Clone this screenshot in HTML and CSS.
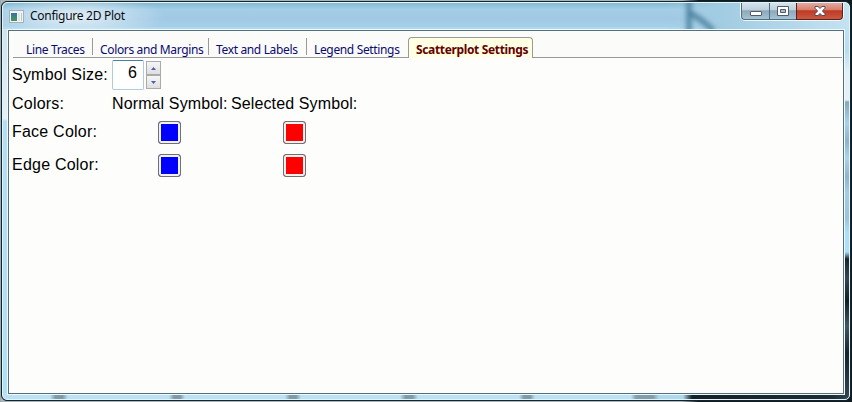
FILE: index.html
```html
<!DOCTYPE html>
<html lang="en">
<head>
<meta charset="utf-8">
<title>Configure 2D Plot</title>
<link rel="stylesheet" href="styles.css">
</head>
<body>
<div class="window">
  <div class="glass">
    <header class="titlebar">
      <svg class="app-icon" width="15" height="13" viewBox="0 0 15 13">
        <defs><linearGradient id="pane" x2="0" y2="1"><stop stop-color="#3f6fa5"/><stop offset=".45" stop-color="#3d8580"/><stop offset="1" stop-color="#4b9457"/></linearGradient></defs>
        <rect x=".5" y=".5" width="14" height="12" fill="#f1f4f5" stroke="#a3b1ba"/>
        <rect x="2" y="3" width="6" height="8" fill="url(#pane)"/>
        <rect x="9" y="3" width="2" height="8" fill="#dfe6e5"/>
        <rect x="12" y="3" width="1" height="8" fill="#b9c9c4"/>
      </svg>
      <h1 class="title">Configure 2D Plot</h1>
      <svg class="reflection" width="70" height="26" viewBox="0 0 70 26">
        <defs><filter id="soft" x="-50%" y="-50%" width="200%" height="200%"><feGaussianBlur stdDeviation="2.5"/></filter></defs>
        <path d="M19-5v36M20 10q10 5 24 18" fill="none" stroke="#4d829f" stroke-width="5" filter="url(#soft)"/>
      </svg>
      <div class="controls">
        <button class="control minimize" aria-label="Minimize"><svg width="12" height="5"><rect x=".5" y=".5" width="11" height="4" rx=".5" fill="#fff" stroke="#505a6b"/></svg></button>
        <button class="control maximize" aria-label="Maximize"><svg width="12" height="10"><path d="M.5.5h11v9H.5z" fill="#fff" stroke="#505a6b"/><path d="M3.500 3.500h5v3h-5z" fill="#a9bdcc" stroke="#505a6b"/></svg></button>
        <button class="control close" aria-label="Close"><svg width="12" height="10" viewBox="0 0 12 10"><path d="M1 .5h3l2 1.900L8 .5h3v1.700L8.400 5 11 7.800v1.700H8L6 7.600 4 9.500H1V7.800L3.600 5 1 2.200z" fill="#fff" stroke="#584c5b"/></svg></button>
      </div>
    </header>
    <main class="client">
      <nav class="tabs">
        <a class="tab line">Line Traces</a>
        <a class="tab colors">Colors and Margins</a>
        <a class="tab labels">Text and Labels</a>
        <a class="tab legend">Legend Settings</a>
        <a class="tab active">Scatterplot Settings</a>
      </nav>
      <section class="settings">
        <span class="label">Symbol Size:</span>
        <div class="spinner">
          <span class="value">6</span>
          <div class="steps">
            <button class="step" aria-label="Increase"><svg width="5" height="3"><path d="M0 3 2.500 0 5 3z" fill="#4a5fae"/></svg></button>
            <button class="step" aria-label="Decrease"><svg width="5" height="3"><path d="M0 0h5L2.500 3z" fill="#4a5fae"/></svg></button>
          </div>
        </div>
        <span class="label raised">Colors:</span>
        <span class="label column raised">Normal Symbol:</span>
        <span class="label column raised">Selected Symbol:</span>
        <span class="label raised">Face Color:</span>
        <button class="swatch blue" aria-label="Normal face color"></button>
        <button class="swatch red" aria-label="Selected face color"></button>
        <span class="label raised">Edge Color:</span>
        <button class="swatch blue" aria-label="Normal edge color"></button>
        <button class="swatch red" aria-label="Selected edge color"></button>
      </section>
    </main>
  </div>
</div>
</body>
</html>
```
FILE: styles.css
```css
* { box-sizing: border-box; }
body {
  margin: 0;
  width: 852px;
  height: 402px;
  padding: 1px;
  overflow: hidden;
  background:
    linear-gradient(#9cabb0, #9cabb0) 0 0 / 1px 100% no-repeat,
    linear-gradient(90deg, #a9b5b8 0 80%, #101b20 82%);
}
button { padding: 0; border: 0; font: inherit; }
svg { display: block; }
.window {
  width: 850px;
  height: 400px;
  border: 1px solid #14242c;
  border-radius: 6px;
  background: #14242c;
}
.glass {
  height: 398px;
  padding: 0 5px 5px;
  border: 1px solid #e3f3fb;
  border-radius: 5px;
  background:
    radial-gradient(ellipse 9px 12px at 56px 394px, #7d9ba8 40%, transparent),
    radial-gradient(ellipse 8px 12px at 174px 394px, #8099a5 40%, transparent),
    radial-gradient(ellipse 8px 12px at 290px 394px, #7d9ba8 40%, transparent),
    radial-gradient(ellipse 9px 12px at 406px 394px, #7d9ba8 40%, transparent),
    radial-gradient(ellipse 8px 12px at 524px 394px, #7d9ba8 40%, transparent),
    linear-gradient(90deg, #b9e2f7 0 628px, #829eab 633px 650px, #add9ee 656px 680px, #142126 689px, #1c2d33 830px, #344750) 0 100% / 100% 6px no-repeat,
    linear-gradient(#c5e6f5 0, #b5def1 48px, #e5f0f6 70px 97px, #84a8bd 99px, #a9d1e9 120px, #8db4ca 138px, #abd3eb 155px, #8fb5cb 174px, #a5cde5 190px, #9ac5de 215px, #a9e1fa 230px 249px, #17262c 256px, #344750 275px, #111f23 298px, #425760 323px, #13242b 350px, #344750) 100% 0 / 6px 100% no-repeat,
    linear-gradient(#c1dfeb 0, #d1e5ec 28px, #e4f1f6 116px, #b5def6 118px, #afe0f7 100%) 0 0 / 6px 100% no-repeat,
    #b5def4;
}
.titlebar {
  display: flex;
  height: 26px;
  margin: 0 -5px;
  padding: 0 5px 0 6px;
  border-radius: 5px 5px 0 0;
  background:
    radial-gradient(ellipse 90px 22px at 72px 14px, #e8f2f7dd 5%, transparent),
    linear-gradient(90deg, transparent 660px, #a2cce2 720px, #c3e2f2),
    linear-gradient(#83b9d2, #a3cee7 25%, #a1c8e5 60%, #a6d0e9 90%, #b5dfef);
}
.app-icon { margin-top: 7px; }
.title {
  margin: 4px 0 0 6px;
  font: 12px/18px "Noto Sans", "Open Sans", sans-serif;
  letter-spacing: -.28px;
  color: #080d12;
  white-space: nowrap;
}
.reflection { margin-left: auto; overflow: hidden; }
.controls {
  display: flex;
  width: 104px;
  height: 18px;
  border: 1px solid #edf8fc;
  border-top: 0;
  border-radius: 0 0 5px 5px;
}
.control {
  display: flex;
  align-items: center;
  justify-content: center;
  width: 28px;
  height: 17px;
  border: solid #536b7b;
  border-width: 0 0 1px 1px;
  background: linear-gradient(#d4e3ec, #bdd0dc 44%, #8ca8b9 48%, #a4c3d5);
}
.minimize { padding-top: 5px; border-radius: 0 0 0 4px; }
.maximize { width: 27px; }
.close {
  width: 47px;
  border-color: #5d211c;
  border-right-width: 1px;
  border-radius: 0 0 4px;
  background: linear-gradient(#e6aa9f, #d77e6b 44%, #bd3a23 48%, #cc5841);
}
.client {
  width: 838px;
  height: 366px;
  margin-left: -1px;
  border: 1px solid #f0fafe;
  outline: 1px solid #566f7d;
  outline-offset: -2px;
  padding: 1px;
  background: #fdfefc;
}
.tabs {
  display: flex;
  align-items: flex-end;
  width: 829px;
  height: 27px;
  margin-left: 4px;
  border-bottom: 1px solid #999;
  font: 12px/16px "Noto Sans", "Open Sans", sans-serif;
  color: #0a0a70;
  background: #fbfbfa;
}
.tab {
  height: 17px;
  padding: 4px 0 0 7px;
  border-right: 1px solid #999;
  margin-bottom: 2px;
  letter-spacing: -.35px;
  white-space: nowrap;
}
.line { width: 80px; padding-left: 13px; }
.colors { width: 116px; }
.labels { width: 98px; }
.legend { width: 101px; border-right: 0; }
.active {
  width: 125px;
  height: 21px;
  margin-bottom: -1px;
  border: 1px solid #999;
  border-bottom: 0;
  border-radius: 4px 4px 0 0;
  background: #ffffe3;
  color: #640000;
  font-weight: 700;
}
.settings {
  display: grid;
  grid-template-columns: 98px 115px 130px;
  grid-template-rows: 32px 27px 29px 37px;
  column-gap: 2px;
  padding: 1px 0 0 3px;
  align-items: center;
  font: 16px/18px "Liberation Sans", Arial, sans-serif;
  color: #000;
}
.label { white-space: nowrap; letter-spacing: .22px; }
.column { letter-spacing: .12px; }
.column + .column { margin-left: 2px; }
.raised { margin-bottom: 2px; }
.spinner { grid-column: 2 / 4; display: flex; gap: 2px; align-items: center; }
.value {
  width: 32px;
  height: 30px;
  padding: 3px 6px 0 0;
  border: 1px solid #aecbe2;
  border-top-color: #4a7eac;
  border-radius: 2px;
  background: #fff;
  text-align: right;
}
.steps { width: 15px; }
.step {
  display: flex;
  align-items: center;
  justify-content: center;
  width: 15px;
  height: 14px;
  border: 1px solid #aaa;
  background: linear-gradient(#f6f6f6, #dedede);
}
.swatch {
  width: 23px;
  height: 23px;
  justify-self: center;
  border: 1px solid #707070;
  border-radius: 3px;
  box-shadow: inset 0 0 0 2px #f1f1f1;
}
.blue { background: #00f; }
.red { background: #f00; }
```
